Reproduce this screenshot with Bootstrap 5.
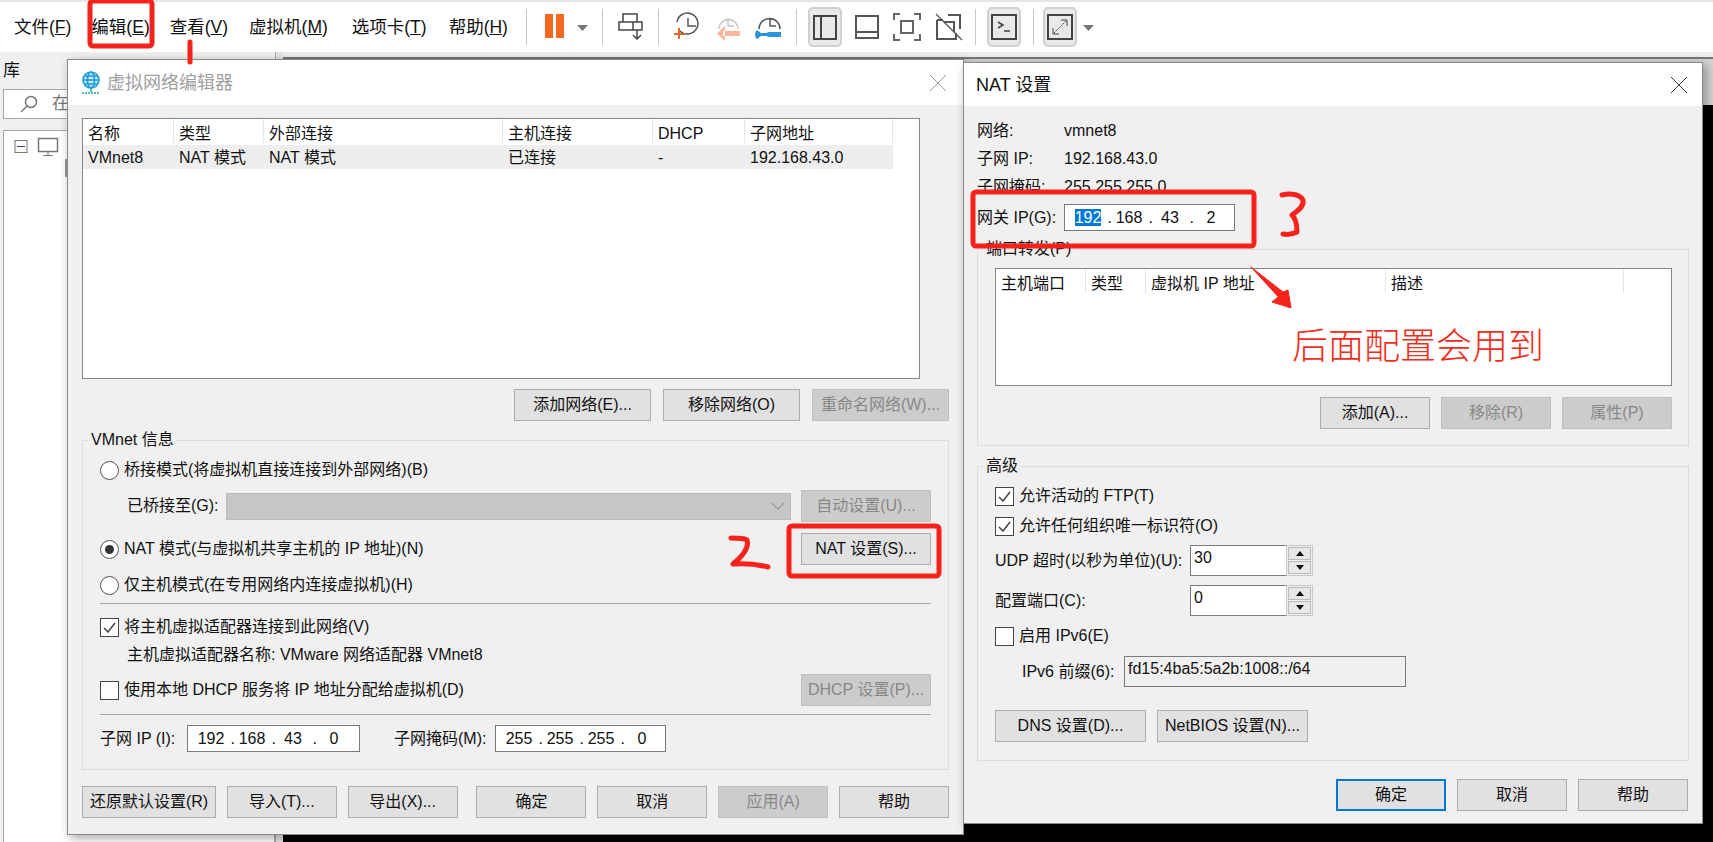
<!DOCTYPE html>
<html lang="zh-CN">
<head>
  <meta charset="UTF-8" />
  <title>虚拟网络编辑器</title>
  <link href="https://cdn.jsdelivr.net/npm/bootstrap@5.3.0/dist/css/bootstrap.min.css" rel="stylesheet"/>
  <style>
    html, body { height: 842px; overflow: hidden; }
    body { background: #fff; font-family: "Liberation Sans", "Noto Sans CJK SC", sans-serif; font-size: 16px; line-height: 20px; color: #111; }

    .shell { width: 1713px; height: 842px; position: relative; overflow: hidden; }
    .topbar { height: 52px; background: #fff; border-top: 2px solid #e6e6e6; }
    .menu-wrap { width: 526px; padding-left: 14px; font-size: 17.500px; }
    .menu-item { margin-right: 20px; white-space: nowrap; }
    .menu-vm { margin-left: 1px; margin-right: 24px; }
    .menu-tab { margin-right: 22px; }
    .menu-key { text-decoration: underline; }
    .tool-sep { width: 1px; height: 36px; background: #c8c8c8; flex: none; }
    .tool-on { background: #e9e9e9; border: 2px solid #d0d0d0; border-radius: 5px; width: 34px; height: 40px; flex: none; }
    .ml-9 { margin-left: 9px; }
    .ml-10 { margin-left: 10px; }
    .ml-11 { margin-left: 11px; }
    .ml-12 { margin-left: 12px; }
    .ml-13 { margin-left: 13px; }
    .ml-14 { margin-left: 14px; }
    .ml-5 { margin-left: 5px; }

    .work { height: 790px; }
    .lib-pane { width: 275px; background: #f0f0f0; padding: 9px 0 0 3px; flex: none; font-size: 17px; }
    .lib-search { height: 30px; background: #fff; border: 1px solid #a8a8a8; margin-top: 8px; padding-left: 16px; gap: 14px; color: #777; }
    .lib-tree { height: 760px; background: #fff; border: 1px solid #a8a8a8; margin-top: 11px; padding: 6px 0 0 10px; }
    .lib-split { width: 8px; background: #e4e4e4; border-left: 1px solid #aaa; flex: none; }
    .vm-top { height: 5px; background: #eee; }
    .vm-tabs { height: 48px; background: #d4d4d4; border-top: 2px solid #777; }
    .vm-screen { height: 737px; background: #000; }

    .dlg { position: absolute; background: #f0f0f0; box-shadow: 3px 3px 10px rgba(0,0,0,.35); border: 1px solid #8a8a8a; }
    .dlg-left { left: 67px; top: 59px; width: 897px; height: 776px; }
    .dlg-right { left: 963px; top: 62px; width: 740px; height: 762px; }
    .dlg-head { background: #fff; font-size: 18px; }
    .head-left { height: 45px; padding: 0 17px 0 13px; }
    .head-right { height: 43px; padding: 0 15px 0 12px; }
    .dlg-title-off { color: #a0a0a0; }
    .title-gap { gap: 6px; }
    .dlg-body-left { padding: 13px 14px 0; }
    .dlg-body-right { padding: 15px 14px 0 13px; }

    .grid-box { background: #fff; border: 1px solid #828790; }
    .grid-a { height: 261px; width: 838px; }
    .grid-b { height: 118px; width: 677px; }
    .grid-head { height: 26px; }
    .cell { padding: 5px 0 0 5px; border-right: 1px solid #e5e5e5; height: 24px; white-space: nowrap; flex: none; }
    .grid-row { height: 24px; background: #eee; width: 810px; }
    .cell-flat { border-right: 0; padding-top: 3px; }
    .c-91 { width: 91px; }
    .c-90 { width: 90px; }
    .c-239 { width: 239px; }
    .c-150 { width: 150px; }
    .c-92 { width: 92px; }
    .c-148 { width: 148px; }
    .c-60 { width: 60px; }
    .c-240 { width: 240px; }
    .c-238 { width: 238px; }

    .win-btn { height: 32px; background: #e1e1e1; border: 1px solid #adadad; border-radius: 0; padding: 0; font-size: 16px; line-height: 20px; color: #111; white-space: nowrap; flex: none; }
    .win-btn:disabled { background: #ccc; border-color: #bfbfbf; color: #888; opacity: 1; }
    .win-btn:hover { background: #e1e1e1; color: #111; border-color: #adadad; }
    .w-137 { width: 137px; }
    .w-130 { width: 130px; }
    .w-110 { width: 110px; }
    .w-134 { width: 134px; }
    .w-151 { width: 151px; }
    .win-default, .win-default:hover { border: 2px solid #0078d7; }
    .gap-11 { gap: 11px; }
    .gap-12 { gap: 12px; }

    .grp { position: relative; border: 1px solid #dcdcdc; }
    .grp-label { position: absolute; left: 6px; top: -11px; background: #f0f0f0; padding: 0 2px; white-space: nowrap; }
    .grp-vm { height: 330px; margin-top: 19px; padding: 19px 17px 0 17px; width: 867px; }
    .grp-port { height: 197px; margin-top: 18px; width: 712px; padding: 18px 0 0 17px; }
    .grp-adv { height: 295px; margin-top: 20px; width: 712px; padding: 19px 0 0 17px; }
    .row-32 { height: 32px; }
    .row-20 { height: 20px; }
    .row-27 { height: 27px; }
    .vt-7 { margin-top: 7px; }
    .vt-8 { margin-top: 8px; }
    .vt-9 { margin-top: 9px; }
    .vt-10 { margin-top: 10px; }
    .vt-11 { margin-top: 11px; }
    .vt-13 { margin-top: 13px; }
    .vt-23 { margin-top: 23px; }

    .rad { width: 19px; height: 19px; border-radius: 50%; border: 1px solid #555; background: #fff; flex: none; margin-right: 5px; position: relative; }
    .rad-on::after { content: ""; position: absolute; left: 4px; top: 4px; width: 9px; height: 9px; border-radius: 50%; background: #333; }
    .chk { width: 19px; height: 19px; border: 1px solid #444; background: #fff; flex: none; margin-right: 5px; display: flex; align-items: center; justify-content: center; }
    .hr-line { height: 1px; background: #a8a8a8; }
    .combo { width: 565px; height: 27px; background: #c6c6c6; border: 1px solid #bbb; margin-left: 7px; padding-right: 5px; }
    .indent-27 { padding-left: 27px; }

    .ip-box { height: 27px; background: #fff; border: 1px solid #7a7a7a; padding-left: 6px; line-height: 25px; flex: none; }
    .ip-w-173 { width: 173px; }
    .ip-w-171 { width: 171px; }
    .ip-seg { width: 34px; text-align: center; flex: none; }
    .ip-dot { width: 7px; text-align: right; flex: none; }
    .sel-text { background: #0078d7; color: #fff; line-height: 20px; }
    .lbl-87 { width: 87px; flex: none; }
    .lbl-101 { width: 101px; flex: none; margin-left: 34px; }
    .lbl-195 { width: 195px; flex: none; }
    .lbl-102 { width: 102px; flex: none; }

    .spin { width: 123px; height: 31px; background: #fff; border: 1px solid #7a7a7a; position: relative; padding-left: 3px; line-height: 24px; flex: none; }
    .spin-side { position: absolute; right: -1px; top: -1px; width: 27px; height: 31px; background: #f0f0f0; border: 1px solid #c8c8c8; padding: 1px; }
    .spin-arrow { height: 13px; background: #e8e8e8; border: 1px solid #bbb; }
    .spin-arrow + .spin-arrow { margin-top: 1px; }
    .tri-up { width: 0; height: 0; border-left: 4px solid transparent; border-right: 4px solid transparent; border-bottom: 5px solid #111; }
    .tri-down { width: 0; height: 0; border-left: 4px solid transparent; border-right: 4px solid transparent; border-top: 5px solid #111; }
    .prefix-box { width: 282px; height: 31px; border: 1px solid #7a7a7a; padding-left: 3px; line-height: 24px; flex: none; }

    .ann { position: absolute; left: 0; top: 0; pointer-events: none; }
    .ann-text { position: absolute; left: 1292px; top: 320px; font-size: 36px; line-height: 46px; color: #ef2d20; white-space: nowrap; font-family: "Noto Sans CJK SC", sans-serif; font-weight: 300; }
  </style>
</head>
<body>
<div class="shell">
  <div class="topbar d-flex align-items-center">
    <div class="menu-wrap d-flex">
      <span class="menu-item">文件(<span class="menu-key">F</span>)</span>
      <span class="menu-item">编辑(<span class="menu-key">E</span>)</span>
      <span class="menu-item">查看(<span class="menu-key">V</span>)</span>
      <span class="menu-item menu-vm">虚拟机(<span class="menu-key">M</span>)</span>
      <span class="menu-item menu-tab">选项卡(<span class="menu-key">T</span>)</span>
      <span class="menu-item">帮助(<span class="menu-key">H</span>)</span>
    </div>
    <span class="tool-sep"></span>
    <svg width="75" height="44" viewBox="0 0 75 44"><rect x="18" y="9" width="8" height="24" fill="#f4691f"/><rect x="29" y="9" width="8" height="24" fill="#f4691f"/><path d="M50 20h11l-5.500 6z" fill="#777"/></svg>
    <span class="tool-sep"></span>
    <svg width="55" height="44" viewBox="0 0 55 44" fill="none" stroke="#444" stroke-width="1.500"><path d="M20 9h14v8h-14zM16 17h23v8h-23zM30 17v8M34 25v9M30 30l4 4 4-4"/></svg>
    <span class="tool-sep"></span>
    <svg width="137" height="44" viewBox="0 0 137 44" fill="none"><g stroke="#555" stroke-width="1.500"><path d="M21 26a10.500 10.500 0 1 0-3-9M29 13v8h8"/></g><path d="M15 29h11M20 23v11" stroke="#e2652b" stroke-width="2"/><g stroke="#c4c4c4" stroke-width="1.300"><path d="M60 24a9.500 9.500 0 1 1 19 0M69 13v8h6"/></g><path d="M64 26h17v5h-17zM66 21l-8 7.500 8 7.500z" fill="#ffb59a"/><g stroke="#555" stroke-width="1.500"><path d="M100 24a10.500 10.500 0 1 1 21 0M111 13v8h6"/></g><path d="M98 25l4 3h5l3-1h12v5h-12l-3-1h-5l-4 3a6 6 0 0 1 0-9z" fill="#2a94dc"/></svg>
    <span class="tool-sep"></span>
    <span class="tool-on ml-11 d-flex align-items-center justify-content-center"><svg width="24" height="25" viewBox="0 0 24 25" fill="none" stroke="#444" stroke-width="2"><path d="M1 1h22v23h-22zM8 1v23"/></svg></span>
    <svg class="ml-12" width="26" height="26" viewBox="0 0 26 26" fill="none" stroke="#555" stroke-width="2"><path d="M2 2h22v22h-22zM2 18h22"/></svg>
    <svg class="ml-13" width="28" height="28" viewBox="0 0 28 28" fill="none" stroke="#666" stroke-width="2"><path d="M1 7v-6h6M21 1h6v6M27 21v6h-6M7 27h-6v-6M8 8h12v12h-12z"/></svg>
    <svg class="ml-14" width="28" height="28" viewBox="0 0 28 28" fill="none" stroke="#555" stroke-width="2"><path d="M2 7h6M2 7v19h19v-6M13 2h12v14M9 9h10v10"/><path d="M1 1l26 26" stroke-width="1.300"/></svg>
    <span class="tool-sep ml-12"></span>
    <span class="tool-on ml-11 d-flex align-items-center justify-content-center"><svg width="26" height="26" viewBox="0 0 26 26" fill="none" stroke="#444" stroke-width="2"><path d="M1 1h24v24h-24z"/><path d="M7 8l5 3-5 3M13 17h6" stroke-width="1.500"/></svg></span>
    <span class="tool-sep ml-12"></span>
    <span class="tool-on ml-9 d-flex align-items-center justify-content-center"><svg width="26" height="26" viewBox="0 0 26 26" fill="none" stroke="#444" stroke-width="2"><path d="M1 1h24v24h-24z"/><path d="M7 19l12-12" stroke-width="1" stroke-dasharray="2 1"/><path d="M14 6h6v6M6 14v6h6" stroke-width="1"/></svg></span>
    <svg class="ml-5" width="12" height="44" viewBox="0 0 12 44"><path d="M1 20h11l-5.500 6z" fill="#777"/></svg>
  </div>

  <div class="work d-flex">
    <div class="lib-pane">
      <div>库</div>
      <div class="lib-search d-flex align-items-center">
        <svg width="18" height="18" viewBox="0 0 18 18" fill="none" stroke="#777" stroke-width="1.500"><circle cx="11" cy="7" r="5.500"/><path d="M7 11l-6 6"/></svg>
        <span>在</span>
      </div>
      <div class="lib-tree">
        <svg width="60" height="40" viewBox="0 0 60 40" fill="none" stroke="#777"><rect x="1" y="3.500" width="12" height="12"/><path d="M3 9.500h8" stroke="#447"/><path d="M24.500 1.500h19v13h-19z" stroke-width="1.500"/><path d="M29 18.500h10M34 15v3"/><path d="M52 23h6v16h-6z" stroke-width="1.500"/></svg>
      </div>
    </div>
    <div class="lib-split"></div>
    <div class="flex-grow-1">
      <div class="vm-top"></div>
      <div class="vm-tabs"></div>
      <div class="vm-screen"></div>
    </div>
  </div>

  <div class="dlg dlg-left">
    <div class="dlg-head head-left d-flex align-items-center justify-content-between">
      <div class="d-flex align-items-center title-gap">
        <svg width="20" height="24" viewBox="0 0 20 24" fill="none" stroke="#1d9bd7" stroke-width="1.500"><circle cx="10" cy="9" r="8" fill="#bfe4f5"/><ellipse cx="10" cy="9" rx="3.500" ry="8"/><path d="M2 9h16M3 5h14M3 13h14"/><path d="M10 17v4" stroke="#2a9"/><path d="M1 22h18" stroke="#2a9" stroke-dasharray="2 1"/></svg>
        <span class="dlg-title-off">虚拟网络编辑器</span>
      </div>
      <svg width="16" height="16" viewBox="0 0 16 16" stroke="#999"><path d="M0 0l16 16M16 0l-16 16"/></svg>
    </div>
    <div class="dlg-body-left">
      <div class="grid-box grid-a">
        <div class="grid-head d-flex">
          <div class="cell c-91">名称</div>
          <div class="cell c-90">类型</div>
          <div class="cell c-239">外部连接</div>
          <div class="cell c-150">主机连接</div>
          <div class="cell c-92">DHCP</div>
          <div class="cell c-148">子网地址</div>
        </div>
        <div class="grid-row d-flex">
          <div class="cell cell-flat c-91">VMnet8</div>
          <div class="cell cell-flat c-90">NAT 模式</div>
          <div class="cell cell-flat c-239">NAT 模式</div>
          <div class="cell cell-flat c-150">已连接</div>
          <div class="cell cell-flat c-92">-</div>
          <div class="cell cell-flat c-148">192.168.43.0</div>
        </div>
      </div>
      <div class="d-flex justify-content-end gap-12 vt-10">
        <button class="btn win-btn w-137">添加网络(E)...</button>
        <button class="btn win-btn w-137">移除网络(O)</button>
        <button class="btn win-btn w-137" disabled>重命名网络(W)...</button>
      </div>

      <div class="grp grp-vm">
        <span class="grp-label">VMnet 信息</span>
        <div class="row-20 d-flex align-items-center"><span class="rad"></span>桥接模式(将虚拟机直接连接到外部网络)(B)</div>
        <div class="row-32 vt-10 d-flex align-items-center justify-content-between">
          <div class="indent-27 d-flex align-items-center">已桥接至(G):<span class="combo d-flex align-items-center justify-content-end"><svg width="14" height="8" viewBox="0 0 14 8" fill="none" stroke="#999" stroke-width="1.300"><path d="M1 1l6 6 6-6"/></svg></span></div>
          <button class="btn win-btn w-130" disabled>自动设置(U)...</button>
        </div>
        <div class="row-32 vt-11 d-flex align-items-center justify-content-between">
          <div class="d-flex align-items-center"><span class="rad rad-on"></span>NAT 模式(与虚拟机共享主机的 IP 地址)(N)</div>
          <button class="btn win-btn w-130">NAT 设置(S)...</button>
        </div>
        <div class="row-20 vt-10 d-flex align-items-center"><span class="rad"></span>仅主机模式(在专用网络内连接虚拟机)(H)</div>
        <div class="hr-line vt-8"></div>
        <div class="row-20 vt-13 d-flex align-items-center"><span class="chk"><svg width="13" height="11" viewBox="0 0 13 11" fill="none" stroke="#444" stroke-width="1.500"><path d="M1 6l4 4 7-9"/></svg></span>将主机虚拟适配器连接到此网络(V)</div>
        <div class="row-20 vt-8 indent-27">主机虚拟适配器名称: VMware 网络适配器 VMnet8</div>
        <div class="row-32 vt-9 d-flex align-items-center justify-content-between">
          <div class="d-flex align-items-center"><span class="chk"></span>使用本地 DHCP 服务将 IP 地址分配给虚拟机(D)</div>
          <button class="btn win-btn w-130" disabled>DHCP 设置(P)...</button>
        </div>
        <div class="hr-line vt-8"></div>
        <div class="row-27 vt-10 d-flex align-items-center">
          <span class="lbl-87">子网 IP (I):</span>
          <span class="ip-box ip-w-173 d-flex"><span class="ip-seg">192</span><span class="ip-dot">.</span><span class="ip-seg">168</span><span class="ip-dot">.</span><span class="ip-seg">43</span><span class="ip-dot">.</span><span class="ip-seg">0</span></span>
          <span class="lbl-101">子网掩码(M):</span>
          <span class="ip-box ip-w-171 d-flex"><span class="ip-seg">255</span><span class="ip-dot">.</span><span class="ip-seg">255</span><span class="ip-dot">.</span><span class="ip-seg">255</span><span class="ip-dot">.</span><span class="ip-seg">0</span></span>
        </div>
      </div>

      <div class="d-flex justify-content-between vt-8 pt-2">
        <button class="btn win-btn w-134">还原默认设置(R)</button>
        <button class="btn win-btn w-110">导入(T)...</button>
        <button class="btn win-btn w-110">导出(X)...</button>
        <button class="btn win-btn w-110 ms-2">确定</button>
        <button class="btn win-btn w-110">取消</button>
        <button class="btn win-btn w-110" disabled>应用(A)</button>
        <button class="btn win-btn w-110">帮助</button>
      </div>
    </div>
  </div>

  <div class="dlg dlg-right">
    <div class="dlg-head head-right d-flex align-items-center justify-content-between">
      <span>NAT 设置</span>
      <svg width="16" height="16" viewBox="0 0 16 16" stroke="#333"><path d="M0 0l16 16M16 0l-16 16"/></svg>
    </div>
    <div class="dlg-body-right">
      <div class="row-20 d-flex"><span class="lbl-87">网络:</span>vmnet8</div>
      <div class="row-20 vt-8 d-flex"><span class="lbl-87">子网 IP:</span>192.168.43.0</div>
      <div class="row-20 vt-8 d-flex"><span class="lbl-87">子网掩码:</span>255.255.255.0</div>
      <div class="row-27 vt-7 d-flex align-items-center"><span class="lbl-87">网关 IP(G):</span><span class="ip-box ip-w-171 d-flex"><span class="ip-seg"><span class="sel-text">192</span></span><span class="ip-dot">.</span><span class="ip-seg">168</span><span class="ip-dot">.</span><span class="ip-seg">43</span><span class="ip-dot">.</span><span class="ip-seg">2</span></span></div>
      <div class="grp grp-port">
        <span class="grp-label">端口转发(P)</span>
        <div class="grid-box grid-b">
          <div class="grid-head d-flex">
            <div class="cell c-90">主机端口</div>
            <div class="cell c-60">类型</div>
            <div class="cell c-240">虚拟机 IP 地址</div>
            <div class="cell c-238">描述</div>
          </div>
        </div>
        <div class="d-flex justify-content-end gap-11 vt-11 me-3">
          <button class="btn win-btn w-110">添加(A)...</button>
          <button class="btn win-btn w-110" disabled>移除(R)</button>
          <button class="btn win-btn w-110" disabled>属性(P)</button>
        </div>
      </div>
      <div class="grp grp-adv">
        <span class="grp-label">高级</span>
        <div class="row-20 d-flex align-items-center"><span class="chk"><svg width="13" height="11" viewBox="0 0 13 11" fill="none" stroke="#444" stroke-width="1.500"><path d="M1 6l4 4 7-9"/></svg></span>允许活动的 FTP(T)</div>
        <div class="row-20 vt-10 d-flex align-items-center"><span class="chk"><svg width="13" height="11" viewBox="0 0 13 11" fill="none" stroke="#444" stroke-width="1.500"><path d="M1 6l4 4 7-9"/></svg></span>允许任何组织唯一标识符(O)</div>
        <div class="vt-9 d-flex align-items-center">
          <span class="lbl-195">UDP 超时(以秒为单位)(U):</span>
          <span class="spin">30<span class="spin-side"><span class="spin-arrow d-flex align-items-center justify-content-center"><span class="tri-up"></span></span><span class="spin-arrow d-flex align-items-center justify-content-center"><span class="tri-down"></span></span></span></span>
        </div>
        <div class="vt-9 d-flex align-items-center">
          <span class="lbl-195">配置端口(C):</span>
          <span class="spin">0<span class="spin-side"><span class="spin-arrow d-flex align-items-center justify-content-center"><span class="tri-up"></span></span><span class="spin-arrow d-flex align-items-center justify-content-center"><span class="tri-down"></span></span></span></span>
        </div>
        <div class="row-20 vt-10 d-flex align-items-center"><span class="chk"></span>启用 IPv6(E)</div>
        <div class="vt-10 d-flex align-items-center indent-27">
          <span class="lbl-102">IPv6 前缀(6):</span>
          <span class="prefix-box">fd15:4ba5:5a2b:1008::/64</span>
        </div>
        <div class="d-flex gap-11 vt-23">
          <button class="btn win-btn w-151">DNS 设置(D)...</button>
          <button class="btn win-btn w-151">NetBIOS 设置(N)...</button>
        </div>
      </div>
      <div class="d-flex justify-content-end gap-11 vt-10 pt-2">
        <button class="btn win-btn w-110 win-default">确定</button>
        <button class="btn win-btn w-110">取消</button>
        <button class="btn win-btn w-110">帮助</button>
      </div>
    </div>
  </div>

  <svg class="ann" width="1713" height="842" viewBox="0 0 1713 842" fill="none" stroke="#f5231b" stroke-linecap="round" stroke-linejoin="round">
    <rect x="90" y="1" width="62" height="45" rx="3" stroke-width="5"/>
    <path d="M190 42v20" stroke-width="5"/>
    <rect x="973" y="192" width="281" height="54" rx="3" stroke-width="5"/>
    <rect x="789" y="526" width="150" height="50" rx="3" stroke-width="5"/>
    <path d="M1282 195c8-2 18-1 21 5 1 5-2 9-11 15 3 3 5 9 5 17-4 2-9 3-14 2" stroke-width="5"/>
    <path d="M731 538c6 0 13 0 16 2 2 6-2 14-14 24 12-1 23 0 35 3" stroke-width="5"/>
    <path d="M1251 267l32 25 5-2 3 18-19-6 6-5z" fill="#f5231b" stroke-width="1"/>
  </svg>
  <div class="ann-text">后面配置会用到</div>
</div>
<script src="https://cdn.jsdelivr.net/npm/bootstrap@5.3.0/dist/js/bootstrap.bundle.min.js"></script>
</body>
</html>
